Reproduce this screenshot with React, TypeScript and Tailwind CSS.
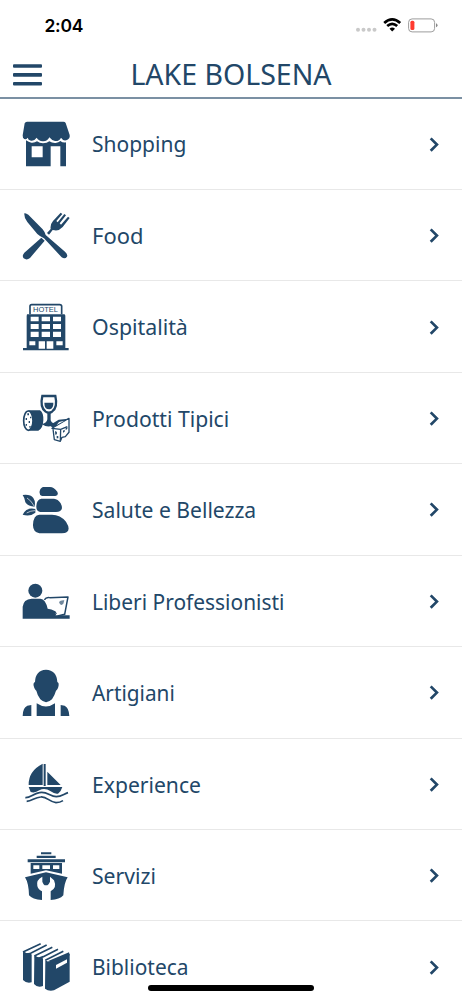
import type { ReactNode } from "react";

const NAVY = "#224768";

function Icon({ viewBox, children }: { viewBox: string; children: ReactNode }) {
  return (
    <svg viewBox={viewBox} className="h-[91px] w-[70px] shrink-0 translate-y-[0.3px]" fill={NAVY} aria-hidden="true">
      {children}
    </svg>
  );
}

const shop = (
  <Icon viewBox="0 -34 210 273">
    <path d="M45 36H160Q165 36 167 40L179 76Q181 86 171 91Q161 96 153 84Q148 95 135 94Q126 93 118 83Q112 96 98 95Q86 94 80 84Q72 95 63 93Q54 91 53 84Q46 93 39 84L38 77L44 41Q46 36 51 36Z" />
    <path fillRule="evenodd" d="M48 92Q56 98 64 99Q74 100 81 95Q89 101 99 101Q111 101 118 95Q127 101 137 100Q146 99 151 94Q159 100 168 98V170H151V110H122V170H48ZM65 110V143H98V110Z" />
  </Icon>
);

const food = (
  <Icon viewBox="0 -30 210 273">
    <path d="M43 39Q47 37 55 43L98 87Q104 94 107 104L165 154Q174 162 171 169Q165 177 155 171L102 114Q91 109 82 101L52 65Q42 54 43 39Z" />
    <path d="M94 112L104 121L60 173Q50 181 41 174Q35 166 43 157ZM111 98L122 86Q120 72 129 62L152 37L157 41L139 62L143 66L163 41L168 45L149 69L153 73L174 49L179 53L158 80Q147 92 134 90L128 89L117 103Z" />
  </Icon>
);

const hotel = (
  <Icon viewBox="0 -41 210 273">
    <path d="M60 58V34Q60 29 65 29H149Q155 29 155 34V58" fill="none" stroke={NAVY} strokeWidth="5" />
    <text x="69" y="52" fontSize="22" textLength="75" lengthAdjust="spacingAndGlyphs" fontFamily="Liberation Sans, sans-serif">HOTEL</text>
    <path d="M51 58H163Q166 58 166 63V159H176V166H39V159H50V63Z" />
    <g fill="#fff">
      <path d="M62 65H86V79H62ZM95 65H120V79H95ZM129 65H153V79H129ZM62 87H86V102H62ZM95 87H120V102H95ZM129 87H153V102H129ZM62 110H86V126H62ZM95 110H120V126H95ZM129 110H153V126H129Z" />
      <path d="M58 139H76V151H58ZM86 139H105V161H86ZM110 139H130V161H110ZM139 139H158V151H139Z" />
    </g>
  </Icon>
);

const products = (
  <Icon viewBox="0 -36 210 273">
    <path d="M55 75H90Q101 82 100 105Q99 130 85 136H54Z" />
    <ellipse cx="55" cy="106" rx="14" ry="29" fill="#fff" stroke={NAVY} strokeWidth="5" />
    <path d="M52 84h5v6h-5ZM60 94h4v5h-4ZM47 98h4v6h-4ZM56 107h4v6h-4ZM47 116h4v5h-4ZM58 122h4v5h-4Z" />
    <path d="M97 32H136Q144 67 126 79Q116 85 107 79Q89 66 97 32Z" fill="#fff" stroke={NAVY} strokeWidth="7" />
    <path d="M103 52H130Q131 68 120 72Q103 74 103 52ZM112 80H122V105Q123 112 134 117Q116 130 96 117Q111 112 112 102Z" />
    <path d="M126 128L177 100V143L158 157L153 169L133 164Z" fill="#fff" />
    <path d="M129 131L133 163L151 168L156 156L166 154L177 141V99L126 129L152 132L172 124M152 132L151 166" fill="none" stroke={NAVY} strokeWidth="4" strokeLinejoin="round" />
    <path d="M119 120L146 103L175 100L128 127Z" />
    <path d="M147 110L163 106L140 119Z" fill="#fff" />
    <path d="M135 138q6-1 6 5t-5 5ZM140 151l5 2v6h-5ZM159 136l5-3v6l-5 3ZM167 128l5-3v6l-5 3Z" />
  </Icon>
);

const stones = (
  <Icon viewBox="0 -32 210 273">
    <path d="M101 36H120Q132 36 142 50Q147 62 136 63H96Q87 61 89 48Q92 37 101 36ZM94 71H132Q144 72 152 85Q161 103 149 109Q146 111 138 111H91Q78 109 79 93Q80 73 94 71ZM88 119H126Q151 119 168 140Q182 162 171 171Q167 175 155 175H88Q68 171 69 149Q70 121 88 119Z" />
    <path d="M38 60Q61 57 70 69Q77 79 74 95Q55 95 46 82Q45 70 38 60ZM38 119Q49 96 76 102V113Q60 126 38 119Z" />
    <path d="M51 69Q63 76 73 94M50 114Q62 107 75 107" fill="none" stroke="#fff" strokeWidth="2" />
  </Icon>
);

const desk = (
  <Icon viewBox="0 -43 210 273">
    <circle cx="76" cy="63" r="21" />
    <path d="M65 87H91Q107 89 113 117Q124 117 136 125Q140 129 135 137H179V147H38V111Q40 89 65 87Z" />
    <path d="M103 91Q108 82 119 84L174 82L164 134L143 139" fill="none" stroke={NAVY} strokeWidth="4.5" strokeLinejoin="round" />
    <path d="M147 97Q151 91 163 92L160 102L155 106L150 104Z" fill="#6f879c" />
    <path d="M134 125L139 131L134 139" fill="none" stroke={NAVY} strokeWidth="3" />
  </Icon>
);

const artisan = (
  <Icon viewBox="0 -38 210 273">
    <path d="M108 29Q140 30 142 66Q149 68 144 84Q141 90 138 92Q134 106 126 118Q108 135 91 118Q82 106 79 92Q76 90 73 84Q67 69 75 66Q76 31 108 29ZM80 130Q108 149 135 130V168H80ZM64 135V168H38Q38 143 52 137ZM152 135L164 137Q177 143 178 168H152Z" />
  </Icon>
);

const boat = (
  <Icon viewBox="0 -49 210 273">
    <path d="M98 27V91H56Q55 49 98 27ZM112 51L152 91H112ZM101 28H107V94H101Z" />
    <path d="M56 97H157Q154 109 144 117Q134 119 122 110Q104 98 88 107Q75 116 62 112Z" />
    <path d="M46 129C61 130 69 117 88 114C111 109 119 125 139 126C155 125 161 118 174 114" fill="none" stroke={NAVY} strokeWidth="5" />
    <path d="M50 140C66 139 74 128 92 127C111 125 118 142 138 144Q150 144 159 138" fill="none" stroke={NAVY} strokeWidth="5" />
  </Icon>
);

const ship = (
  <Icon viewBox="0 -45 210 273">
    <path d="M93 21H124V27H93ZM80 31H137V38H80ZM53 42H165V51H53Z" />
    <path fillRule="evenodd" d="M62 53H156V85L108 75L62 85ZM70 60V71H88V60ZM97 60V71H120V60ZM129 60V71H148V60Z" />
    <path d="M45 96L108 81L173 96Q162 112 160 150Q149 163 122 164V138Q142 128 132 105L120 94V109Q115 121 108 120Q101 121 97 109V94Q78 103 82 122Q84 132 96 138V164Q67 162 57 150Q56 113 45 96Z" />
  </Icon>
);

const books = (
  <Icon viewBox="30 20 210 273">
    <path d="M69 112L95 120V203Q79 207 69 196ZM103 124L129 132V214Q112 220 102 208ZM136 137Q149 145 160 139L209 117V201L162 227Q146 231 135 222Z" />
    <g fill="none" stroke={NAVY} strokeWidth="5">
      <path d="M69 112L122 87M79 119L92 116L140 91M103 124L157 98M114 132L130 126L174 104M136 137L190 110M72 113Q76 121 94 119M105 126Q113 134 128 131" />
    </g>
    <path d="M143 140L207 113L209 122L158 144Z" />
    <path d="M168 151L201 134V144L168 162Z" fill="#fff" />
  </Icon>
);

const items = [
  { label: "Shopping", icon: shop, text: "scale-x-[0.933]" },
  { label: "Food", icon: food, text: "scale-x-[0.975]" },
  { label: "Ospitalità", icon: hotel, text: "scale-x-[0.948]" },
  { label: "Prodotti Tipici", icon: products, text: "scale-x-[0.94]" },
  { label: "Salute e Bellezza", icon: stones, text: "scale-x-[0.938]" },
  { label: "Liberi Professionisti", icon: desk, text: "scale-x-[0.93]" },
  { label: "Artigiani", icon: artisan, text: "scale-x-[0.925]" },
  { label: "Experience", icon: boat, text: "scale-x-[0.938]" },
  { label: "Servizi", icon: ship, text: "scale-x-[0.941]" },
  { label: "Biblioteca", icon: books, text: "scale-x-[0.93]" },
];

function StatusBar() {
  return (
    <div className="flex h-[50.5px] items-center justify-between pl-[44.5px] pr-[24px] text-black">
      <span className="font-['Inter',sans-serif] text-[17.5px] font-semibold leading-none tracking-[-0.3px]">2:04</span>
      <svg viewBox="0 0 84 18" className="h-[18px] w-[84px] translate-y-[0.3px]" aria-hidden="true">
        <g fill="#c9c9c9">
          <circle cx="4" cy="13.4" r="2" />
          <circle cx="9.5" cy="13.4" r="2" />
          <circle cx="15" cy="13.4" r="2" />
          <circle cx="20.5" cy="13.4" r="2" />
        </g>
        <g fill="none" stroke="#000" strokeWidth="2.7">
          <path d="M30.2 6.7Q38.2-.6 46.2 6.7" />
          <path d="M33.2 9.8Q38.2 5.3 43.2 9.8" />
        </g>
        <path d="M35.5 12.4Q38.2 10.2 41 12.4L38.2 15.2Z" />
        <rect x="54.6" y="2.6" width="26" height="13" rx="3.5" fill="none" stroke="#9c9c9c" />
        <rect x="56.4" y="4.4" width="4" height="9.4" rx="1.5" fill="#ff3b30" />
        <path d="M82 7Q83.5 7.7 83.5 9T82 10.9Z" fill="#888" />
      </svg>
    </div>
  );
}

export default function App() {
  return (
    <main className="relative h-[1000px] w-[462px] overflow-hidden bg-white font-['Noto_Sans',sans-serif] text-[#224768]">
      <StatusBar />
      <header className="grid h-[48px] grid-cols-[60px_1fr_60px] items-center border-b-2 border-[#7b90a3]">
        <button aria-label="Menu" className="ml-[13px] w-[29px]">
          <svg viewBox="0 0 29 22" className="block h-[22px] w-[29px] translate-y-[1px]" fill={NAVY} aria-hidden="true">
            <rect y="0.2" width="29" height="3.6" rx="1" />
            <rect y="9.1" width="29" height="3.6" rx="1" />
            <rect y="18" width="29" height="3.6" rx="1" />
          </svg>
        </button>
        <h1 className="translate-y-[0.7px] whitespace-nowrap text-center text-[28.5px] leading-none">LAKE BOLSENA</h1>
      </header>
      <ul>
        {items.map((item) => (
          <li key={item.label} className="flex h-[91.45px] items-center border-b border-[#e8e8e8] pl-[10px] pr-[22px]">
            {item.icon}
            <span className={`ml-3 mr-auto origin-left translate-y-px whitespace-nowrap text-[22.5px] leading-none ${item.text}`}>{item.label}</span>
            <svg viewBox="0 0 12 16" className="h-4 w-3 translate-y-[0.6px]" fill="none" stroke={NAVY} strokeWidth="2.7" aria-hidden="true">
              <path d="M2.7 1.8L8.9 8L2.7 14.2" />
            </svg>
          </li>
        ))}
      </ul>
      <div className="absolute bottom-[9px] left-[148px] h-[6px] w-[166px] rounded-full bg-black" />
    </main>
  );
}
